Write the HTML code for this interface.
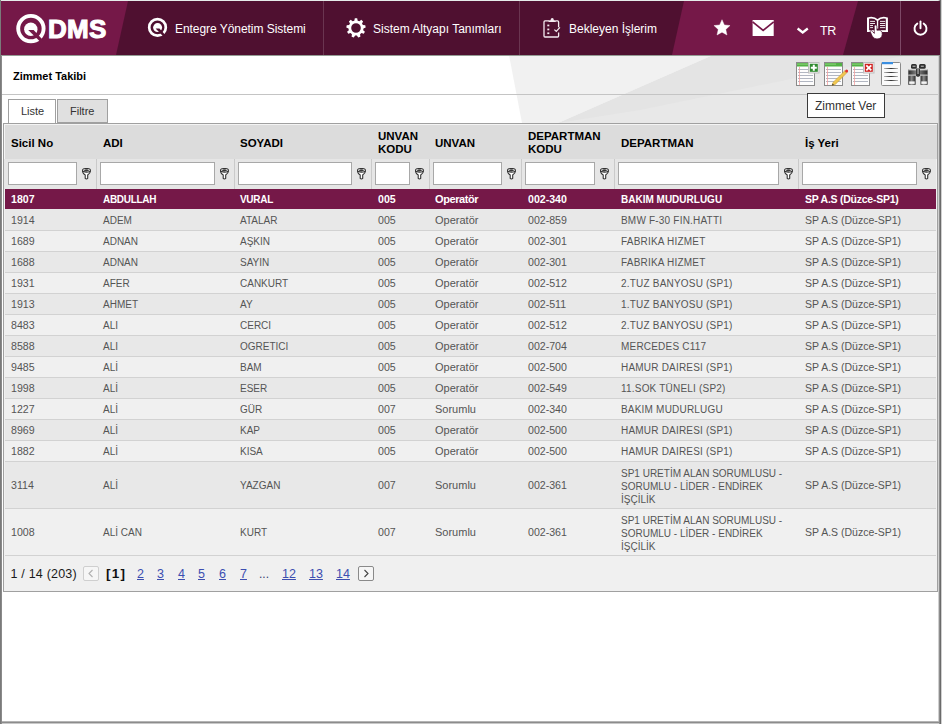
<!DOCTYPE html>
<html><head><meta charset="utf-8">
<style>
*{box-sizing:border-box;margin:0;padding:0}
html,body{width:942px;height:724px;overflow:hidden;background:#fff;font-family:"Liberation Sans",sans-serif}
.abs{position:absolute}
svg{display:block}
#hdr{position:absolute;left:1px;top:1px;width:939px;height:54px;background:#4f1030;overflow:hidden}
.mt{position:absolute;color:#fff;font-size:12px;white-space:nowrap;line-height:14px}
.grid{position:absolute;left:3px;top:123px;width:935px;height:469px;border:1px solid #a0a0a0;background:#f0f0f0}
.ghd{position:absolute;left:4px;top:124px;width:933px;height:35px;background:#dcdcdc;border-top:1px solid #f4f4f4;border-left:1px solid #f4f4f4}
.gfl{position:absolute;left:4px;top:159px;width:932px;height:30px;background:#e6e6e6}
.hd{position:absolute;font-weight:bold;font-size:11.5px;color:#000;line-height:13px;white-space:nowrap}
.row{position:absolute;left:5px;width:931px;font-size:11px;color:#555;background:#f0f0f0}
.row.alt{background:#e8e8e8}
.row.sel{background:#751848;color:#fff;font-weight:bold}
.rb{position:absolute;left:5px;width:931px;height:1px;background:#d2d2d2}
.row span{position:absolute;white-space:nowrap}
.inp{position:absolute;top:162px;height:23px;background:#fff;border:1px solid #a8a8a8}
.dv{position:absolute;top:159px;width:1px;height:30px;background:#cacaca}
.fi{position:absolute;top:168px}
.pg{position:absolute;top:567px;font-size:12.5px;color:#3c4eb0;text-decoration:underline;white-space:nowrap;line-height:14px}
</style></head>
<body>
<!-- page background shapes -->
<svg class="abs" style="left:0;top:0" width="942" height="724">
  <polygon points="509,55 713,55 558,123 522,123" fill="#f1f1f1"/>
  <polygon points="713,55 942,55 942,123 558,123" fill="#e4e4e4"/>
  <polygon points="558,123 640,110 942,48 942,123" fill="#e8e8e8"/>
</svg>

<!-- frame -->
<div class="abs" style="left:0;top:0;width:942px;height:1px;background:#e6ecea"></div>
<div class="abs" style="left:0;top:0;width:1px;height:724px;background:#7a7a7a"></div>
<div class="abs" style="left:1px;top:55px;width:1px;height:669px;background:#8a8a8a"></div>
<div class="abs" style="left:938px;top:0;width:1px;height:724px;background:#d0d0d0"></div>
<div class="abs" style="left:939px;top:0;width:1px;height:724px;background:#8c8c8c"></div>
<div class="abs" style="left:940px;top:0;width:1px;height:724px;background:#6a6a6a"></div>
<div class="abs" style="left:941px;top:0;width:1px;height:724px;background:#d0d0d0"></div>
<div class="abs" style="left:2px;top:721px;width:937px;height:1px;background:#b4b4b4"></div>
<div class="abs" style="left:2px;top:722px;width:937px;height:1px;background:#8c8c8c"></div>
<div class="abs" style="left:2px;top:723px;width:937px;height:1px;background:#c8c8c8"></div>

<!-- header -->
<div id="hdr">
  <svg class="abs" style="left:0;top:0" width="939" height="54">
    <polygon points="0,0 127,0 115,54 0,54" fill="#751848"/>
    <polygon points="683,0 857,0 842,54 671,54" fill="#751848"/>
    <line x1="322.5" y1="0" x2="322.5" y2="54" stroke="#6a3550" stroke-width="1"/>
    <line x1="518.5" y1="0" x2="518.5" y2="54" stroke="#6a3550" stroke-width="1"/>
    <line x1="899.5" y1="0" x2="899.5" y2="54" stroke="#7d4866" stroke-width="1"/>
  </svg>
</div>
<div class="abs" style="left:1px;top:55px;width:938px;height:1px;background:#949c94"></div>

<!-- logo -->
<svg class="abs" style="left:14px;top:12px" width="36" height="34" viewBox="14 12 36 34">
  <circle cx="30.9" cy="28.6" r="12.7" fill="none" stroke="#fff" stroke-width="3.9"/>
  <circle cx="30.8" cy="29.2" r="6.7" fill="#fff"/>
  <polygon points="28.2,30.1 33.6,30.1 43.2,40.3 41,42.5" fill="#751848"/>
</svg>
<div class="abs" style="left:48px;top:15px;font-size:26px;font-weight:bold;color:#fff;line-height:29px;letter-spacing:0.3px;-webkit-text-stroke:1.1px #fff">DMS</div>

<!-- menu 1 -->
<svg class="abs" style="left:146px;top:16px" width="24" height="24" viewBox="146 16 24 24">
  <circle cx="157.5" cy="27.4" r="8.3" fill="none" stroke="#fff" stroke-width="2.7"/>
  <circle cx="157.6" cy="27.6" r="4.5" fill="#fff"/>
  <polygon points="155.6,28.5 159.4,28.5 165.6,35.2 163.6,36.8" fill="#4f1030"/>
</svg>
<div class="mt" style="left:175px;top:22px;letter-spacing:-0.05px">Entegre Yönetim Sistemi</div>

<!-- menu 2: gear -->
<svg class="abs" style="left:343.8px;top:15.6px" width="24" height="24" viewBox="-12 -12 24 24">
  <g transform="rotate(0)">
    <path id="gearp" fill="#fff" fill-rule="evenodd" d="M-1.69,-7.31 L-1.18,-9.63 L1.18,-9.63 L1.69,-7.31 L3.40,-6.68 L5.28,-8.14 L7.09,-6.62 L5.99,-4.51 L6.90,-2.93 L9.28,-2.84 L9.69,-0.51 L7.49,0.39 L7.17,2.19 L8.93,3.79 L7.75,5.84 L5.49,5.11 L4.08,6.29 L4.40,8.64 L2.18,9.45 L0.91,7.44 L-0.91,7.44 L-2.18,9.45 L-4.40,8.64 L-4.08,6.29 L-5.49,5.11 L-7.75,5.84 L-8.93,3.79 L-7.17,2.19 L-7.49,0.39 L-9.69,-0.51 L-9.28,-2.84 L-6.90,-2.93 L-5.99,-4.51 L-7.09,-6.62 L-5.28,-8.14 L-3.40,-6.68 Z M4.8,0 A4.8,4.8 0 1 0 -4.8,0 A4.8,4.8 0 1 0 4.8,0 Z"/>
  </g>
</svg>
<div class="mt" style="left:373px;top:22px;letter-spacing:0px">Sistem Altyapı Tanımları</div>

<!-- menu 3: clipboard -->
<svg class="abs" style="left:540px;top:16px" width="24" height="24" viewBox="540 16 24 24">
  <path d="M549,20.9 H545 Q544,20.9 544,21.9 V36 Q544,37 545,37 H557.6 Q558.6,37 558.6,36 V32.4 M558.6,27.2 V21.9 Q558.6,20.9 557.6,20.9 H555.4" fill="none" stroke="#f4eaf0" stroke-width="1.3"/>
  <path d="M548.6,22 H555.8 V21 Q555.8,20.2 554.8,20.2 H553.9 Q553.7,18 552.2,18 Q550.7,18 550.5,20.2 H549.6 Q548.6,20.2 548.6,21 Z" fill="#f4eaf0"/>
  <rect x="547.3" y="24.6" width="2" height="1.7" fill="#f4eaf0"/>
  <rect x="547.3" y="28.6" width="2" height="1.7" fill="#f4eaf0"/>
  <rect x="547.3" y="32.4" width="2" height="1.7" fill="#f4eaf0"/>
  <path d="M554.4,29.6 L556.3,31.4 L559.9,27.4" fill="none" stroke="#f4eaf0" stroke-width="1.3"/>
</svg>
<div class="mt" style="left:569px;top:22px;letter-spacing:0px">Bekleyen İşlerim</div>

<!-- star -->
<svg class="abs" style="left:712px;top:18px" width="20" height="19" viewBox="712 18 20 19">
  <polygon points="722.00,19.70 724.34,24.94 730.05,25.55 725.78,29.39 726.97,35.00 722.00,32.14 717.03,35.00 718.22,29.39 713.95,25.55 719.66,24.94" fill="#fff" stroke="#fff" stroke-width="0.4" stroke-linejoin="round"/>
</svg>
<!-- mail -->
<svg class="abs" style="left:751px;top:19px" width="24" height="18" viewBox="751 19 24 18">
  <rect x="752.6" y="20" width="21.1" height="16" fill="#fff"/>
  <path d="M752.6,21.8 L763.15,30.4 L773.7,21.8" fill="none" stroke="#751848" stroke-width="1.7"/>
</svg>
<!-- chevron -->
<svg class="abs" style="left:795px;top:26px" width="16" height="10" viewBox="795 26 16 10">
  <path d="M797.6,28.5 L802.7,32.5 L807.8,28.5" fill="none" stroke="#fff" stroke-width="2.3"/>
</svg>
<div class="mt" style="left:820px;top:24px;font-size:12.5px;letter-spacing:-0.4px">TR</div>

<!-- book -->
<svg class="abs" style="left:864px;top:14px" width="28" height="28" viewBox="864 14 28 28">
  <rect x="867" y="17.5" width="2.1" height="14.5" fill="#fff"/>
  <rect x="885.8" y="17.5" width="2.1" height="14.5" fill="#fff"/>
  <rect x="867" y="30.2" width="20.9" height="1.8" fill="#fff"/>
  <path d="M868.5,18 Q874,16.8 877.5,20.2 Q881,16.8 886.5,18" fill="none" stroke="#fff" stroke-width="1.7"/>
  <rect x="876.9" y="20" width="1.3" height="8.6" fill="#fff"/>
  <g fill="#fff">
    <rect x="870.1" y="20.9" width="4.9" height="0.9"/><rect x="870.1" y="23" width="4.9" height="0.9"/>
    <rect x="870.1" y="25.1" width="2.9" height="0.9"/><rect x="870.1" y="27.2" width="2.9" height="0.9"/>
    <rect x="880" y="20.9" width="5.2" height="0.9"/><rect x="880" y="23" width="5.2" height="0.9"/>
    <rect x="880" y="25.1" width="5.2" height="0.9"/><rect x="880" y="27.2" width="5.2" height="0.9"/>
  </g>
  <path d="M874.3,26.3 Q874.3,25 875.6,25 Q876.9,25 876.9,26.3 V30.3 Q879.5,29.8 881.3,31 Q882.4,32 882.2,34.5 Q881.8,38.9 877,38.9 Q873.6,38.9 872.2,36 L870.2,31.6 Q870,30.6 871,30.6 Q872,30.6 872.6,31.6 L874.3,33.4 Z" fill="#fff" stroke="#4f1030" stroke-width="0.7"/>
</svg>
<!-- power -->
<svg class="abs" style="left:911px;top:18px" width="20" height="20" viewBox="911 18 20 20">
  <path d="M917.3,23.6 A6,6 0 1 0 923.7,23.6" fill="none" stroke="#fff" stroke-width="1.9" stroke-linecap="round"/>
  <line x1="920.5" y1="21.4" x2="920.5" y2="28.2" stroke="#fff" stroke-width="1.9" stroke-linecap="round"/>
</svg>

<!-- page title -->
<div class="abs" style="left:13px;top:70px;font-size:11px;font-weight:bold;color:#000;line-height:12px">Zimmet Takibi</div>
<div class="abs" style="left:2px;top:94px;width:936px;height:1px;background:#c4c4c4"></div>

<!-- toolbar icons -->
<svg class="abs" style="left:790px;top:58px" width="145" height="32" viewBox="790 58 145 32">
<g>
  <rect x="796.5" y="62.5" width="18" height="23" fill="#fdfdfd" stroke="#8a8a8a"/>
  <rect x="797" y="63" width="17" height="3.5" fill="#52b244"/>
  <rect x="797" y="63.6" width="11" height="1" fill="#8fd27f"/>
  <g stroke="#b2b7c2" stroke-width="1">
    <line x1="798" y1="69.5" x2="813" y2="69.5"/><line x1="798" y1="72.5" x2="813" y2="72.5"/>
    <line x1="798" y1="75.5" x2="813" y2="75.5"/><line x1="798" y1="78.5" x2="813" y2="78.5"/>
    <line x1="798" y1="81.5" x2="813" y2="81.5"/>
  </g>
  <line x1="799.5" y1="67" x2="799.5" y2="85" stroke="#f4a0a0" stroke-width="0.8"/>
</g>
<rect x="808.5" y="62.5" width="10.5" height="10.5" fill="#f2f2f2" stroke="#bdbdbd"/>
<rect x="809.8" y="63.8" width="8" height="8" fill="#2f8a2f"/>
<path d="M813.8,64.8 V70.8 M810.8,67.8 H816.8" stroke="#fff" stroke-width="2"/>
<g>
  <rect x="824.5" y="62.5" width="18" height="23" fill="#fdfdfd" stroke="#8a8a8a"/>
  <rect x="825" y="63" width="17" height="3.5" fill="#52b244"/>
  <rect x="825" y="63.6" width="11" height="1" fill="#8fd27f"/>
  <g stroke="#b2b7c2" stroke-width="1">
    <line x1="826" y1="69.5" x2="841" y2="69.5"/><line x1="826" y1="72.5" x2="841" y2="72.5"/>
    <line x1="826" y1="75.5" x2="841" y2="75.5"/><line x1="826" y1="78.5" x2="841" y2="78.5"/>
    <line x1="826" y1="81.5" x2="841" y2="81.5"/>
  </g>
  <line x1="827.5" y1="67" x2="827.5" y2="85" stroke="#f4a0a0" stroke-width="0.8"/>
</g>
<path d="M832,85.6 L833,82.4 L845,70.6 L847,72.6 L835.2,84.6 Z" fill="url(#pen)" stroke="#c09020" stroke-width="0.5"/>
<circle cx="846.6" cy="71" r="1.5" fill="#e03030"/>
<path d="M832,85.6 L832.6,83.6 L834,85 Z" fill="#333"/>
<g>
  <rect x="851.5" y="62.5" width="18" height="23" fill="#fdfdfd" stroke="#8a8a8a"/>
  <rect x="852" y="63" width="17" height="3.5" fill="#52b244"/>
  <rect x="852" y="63.6" width="11" height="1" fill="#8fd27f"/>
  <g stroke="#b2b7c2" stroke-width="1">
    <line x1="853" y1="69.5" x2="868" y2="69.5"/><line x1="853" y1="72.5" x2="868" y2="72.5"/>
    <line x1="853" y1="75.5" x2="868" y2="75.5"/><line x1="853" y1="78.5" x2="868" y2="78.5"/>
    <line x1="853" y1="81.5" x2="868" y2="81.5"/>
  </g>
  <line x1="854.5" y1="67" x2="854.5" y2="85" stroke="#f4a0a0" stroke-width="0.8"/>
</g>
<rect x="863.5" y="62.5" width="10.5" height="10.5" fill="#f2f2f2" stroke="#bdbdbd"/>
<rect x="864.8" y="63.8" width="8" height="8" fill="#d02020"/>
<path d="M866.3,65.3 L871.3,70.3 M871.3,65.3 L866.3,70.3" stroke="#fff" stroke-width="1.8"/>
<rect x="881.5" y="62.5" width="19" height="23" rx="1" fill="#fafafa" stroke="#8a8a8a"/>
<rect x="882" y="62" width="11" height="2.2" fill="#3a8ee0"/>
<g stroke="url(#dl)" stroke-width="1">
<line x1="884" y1="68.5" x2="898" y2="68.5"/><line x1="884" y1="72.5" x2="898" y2="72.5"/>
<line x1="884" y1="76.5" x2="898" y2="76.5"/><line x1="884" y1="80.5" x2="898" y2="80.5"/>
</g>
<defs>
<linearGradient id="bar" x1="0" y1="0" x2="1" y2="0"><stop offset="0" stop-color="#2a2a2a"/><stop offset="0.45" stop-color="#8a8a8a"/><stop offset="1" stop-color="#2a2a2a"/></linearGradient>
<linearGradient id="dl" gradientUnits="userSpaceOnUse" x1="883" y1="0" x2="899" y2="0"><stop offset="0" stop-color="#d0d0d0"/><stop offset="0.5" stop-color="#303030"/><stop offset="1" stop-color="#d0d0d0"/></linearGradient>
<linearGradient id="pen" x1="0" y1="0" x2="1" y2="1"><stop offset="0" stop-color="#ffe680"/><stop offset="1" stop-color="#e0a820"/></linearGradient>
</defs>
<rect x="911" y="64" width="5.8" height="4.8" rx="1.5" fill="#2e2e2e"/>
<rect x="919" y="64" width="6.7" height="4.8" rx="1.5" fill="#2e2e2e"/>
<rect x="912.5" y="65.6" width="3" height="1.4" fill="#9a9a9a"/><rect x="920.8" y="65.6" width="3" height="1.4" fill="#9a9a9a"/>
<rect x="908.3" y="69.2" width="19.3" height="6.4" fill="url(#bar)"/>
<rect x="908.3" y="69.2" width="19.3" height="1.1" fill="#e8e8e8"/>
<rect x="908.3" y="74.6" width="19.3" height="1" fill="#d8d8d8"/>
<path d="M916,68.5 H920 V76 L918,77 L916,76 Z" fill="#3a3a3a"/>
<rect x="917.4" y="69" width="1.3" height="5" fill="#aaa"/>
<rect x="908.3" y="75.8" width="7.3" height="9" fill="url(#bar)"/>
<rect x="920.5" y="75.8" width="7.1" height="9" fill="url(#bar)"/>
<rect x="909.2" y="81.4" width="5.5" height="2.5" fill="#f4f4f4"/>
<rect x="921.3" y="81.4" width="5.5" height="2.5" fill="#f4f4f4"/>
</svg>

<!-- tabs -->
<div class="abs" style="left:8px;top:99px;width:48px;height:24px;border:1px solid #a0a0a0;border-bottom:none;background:#fff"></div>
<div class="abs" style="left:21px;top:105px;font-size:11px;color:#333;z-index:3;line-height:12px">Liste</div>
<div class="abs" style="left:57px;top:99px;width:51px;height:24px;border:1px solid #a0a0a0;background:#e0e0e0"></div>
<div class="abs" style="left:70px;top:105px;font-size:11px;color:#333;line-height:12px">Filtre</div>

<!-- grid -->
<div class="grid"></div>
<div class="ghd"></div>
<div class="gfl"></div>
<div class="hd" style="left:11px;top:137px">Sicil No</div>
<div class="hd" style="left:103px;top:137px">ADI</div>
<div class="hd" style="left:240px;top:137px">SOYADI</div>
<div class="hd" style="left:378px;top:130px">UNVAN<br>KODU</div>
<div class="hd" style="left:435px;top:137px">UNVAN</div>
<div class="hd" style="left:528px;top:130px">DEPARTMAN<br>KODU</div>
<div class="hd" style="left:621px;top:137px">DEPARTMAN</div>
<div class="hd" style="left:805px;top:137px">İş Yeri</div>
<div class="inp" style="left:8px;width:69px"></div>
<svg class="fi" style="left:82px" width="11" height="12" viewBox="0 0 11 12"><path d="M0.4,2.6 Q0.6,5.4 3.2,6.9 L3.2,10.3 Q4.45,11.6 5.7,10.3 L5.7,6.9 Q8.3,5.4 8.5,2.6" fill="#fff" stroke="#333" stroke-width="1.1"/><ellipse cx="4.45" cy="2.3" rx="4" ry="1.8" fill="#fff" stroke="#333" stroke-width="1.1"/><path d="M1.6,2.6 Q4.45,-0.2 7.3,2.6 Q4.45,4.2 1.6,2.6 Z" fill="#3a3a3a"/></svg>
<div class="inp" style="left:100px;width:115px"></div>
<svg class="fi" style="left:220px" width="11" height="12" viewBox="0 0 11 12"><path d="M0.4,2.6 Q0.6,5.4 3.2,6.9 L3.2,10.3 Q4.45,11.6 5.7,10.3 L5.7,6.9 Q8.3,5.4 8.5,2.6" fill="#fff" stroke="#333" stroke-width="1.1"/><ellipse cx="4.45" cy="2.3" rx="4" ry="1.8" fill="#fff" stroke="#333" stroke-width="1.1"/><path d="M1.6,2.6 Q4.45,-0.2 7.3,2.6 Q4.45,4.2 1.6,2.6 Z" fill="#3a3a3a"/></svg>
<div class="inp" style="left:238px;width:114px"></div>
<svg class="fi" style="left:357px" width="11" height="12" viewBox="0 0 11 12"><path d="M0.4,2.6 Q0.6,5.4 3.2,6.9 L3.2,10.3 Q4.45,11.6 5.7,10.3 L5.7,6.9 Q8.3,5.4 8.5,2.6" fill="#fff" stroke="#333" stroke-width="1.1"/><ellipse cx="4.45" cy="2.3" rx="4" ry="1.8" fill="#fff" stroke="#333" stroke-width="1.1"/><path d="M1.6,2.6 Q4.45,-0.2 7.3,2.6 Q4.45,4.2 1.6,2.6 Z" fill="#3a3a3a"/></svg>
<div class="inp" style="left:375px;width:35px"></div>
<svg class="fi" style="left:415px" width="11" height="12" viewBox="0 0 11 12"><path d="M0.4,2.6 Q0.6,5.4 3.2,6.9 L3.2,10.3 Q4.45,11.6 5.7,10.3 L5.7,6.9 Q8.3,5.4 8.5,2.6" fill="#fff" stroke="#333" stroke-width="1.1"/><ellipse cx="4.45" cy="2.3" rx="4" ry="1.8" fill="#fff" stroke="#333" stroke-width="1.1"/><path d="M1.6,2.6 Q4.45,-0.2 7.3,2.6 Q4.45,4.2 1.6,2.6 Z" fill="#3a3a3a"/></svg>
<div class="inp" style="left:433px;width:69px"></div>
<svg class="fi" style="left:507px" width="11" height="12" viewBox="0 0 11 12"><path d="M0.4,2.6 Q0.6,5.4 3.2,6.9 L3.2,10.3 Q4.45,11.6 5.7,10.3 L5.7,6.9 Q8.3,5.4 8.5,2.6" fill="#fff" stroke="#333" stroke-width="1.1"/><ellipse cx="4.45" cy="2.3" rx="4" ry="1.8" fill="#fff" stroke="#333" stroke-width="1.1"/><path d="M1.6,2.6 Q4.45,-0.2 7.3,2.6 Q4.45,4.2 1.6,2.6 Z" fill="#3a3a3a"/></svg>
<div class="inp" style="left:525px;width:70px"></div>
<svg class="fi" style="left:600px" width="11" height="12" viewBox="0 0 11 12"><path d="M0.4,2.6 Q0.6,5.4 3.2,6.9 L3.2,10.3 Q4.45,11.6 5.7,10.3 L5.7,6.9 Q8.3,5.4 8.5,2.6" fill="#fff" stroke="#333" stroke-width="1.1"/><ellipse cx="4.45" cy="2.3" rx="4" ry="1.8" fill="#fff" stroke="#333" stroke-width="1.1"/><path d="M1.6,2.6 Q4.45,-0.2 7.3,2.6 Q4.45,4.2 1.6,2.6 Z" fill="#3a3a3a"/></svg>
<div class="inp" style="left:618px;width:161px"></div>
<svg class="fi" style="left:784px" width="11" height="12" viewBox="0 0 11 12"><path d="M0.4,2.6 Q0.6,5.4 3.2,6.9 L3.2,10.3 Q4.45,11.6 5.7,10.3 L5.7,6.9 Q8.3,5.4 8.5,2.6" fill="#fff" stroke="#333" stroke-width="1.1"/><ellipse cx="4.45" cy="2.3" rx="4" ry="1.8" fill="#fff" stroke="#333" stroke-width="1.1"/><path d="M1.6,2.6 Q4.45,-0.2 7.3,2.6 Q4.45,4.2 1.6,2.6 Z" fill="#3a3a3a"/></svg>
<div class="inp" style="left:802px;width:115px"></div>
<svg class="fi" style="left:922px" width="11" height="12" viewBox="0 0 11 12"><path d="M0.4,2.6 Q0.6,5.4 3.2,6.9 L3.2,10.3 Q4.45,11.6 5.7,10.3 L5.7,6.9 Q8.3,5.4 8.5,2.6" fill="#fff" stroke="#333" stroke-width="1.1"/><ellipse cx="4.45" cy="2.3" rx="4" ry="1.8" fill="#fff" stroke="#333" stroke-width="1.1"/><path d="M1.6,2.6 Q4.45,-0.2 7.3,2.6 Q4.45,4.2 1.6,2.6 Z" fill="#3a3a3a"/></svg>
<div class="dv" style="left:96px"></div>
<div class="dv" style="left:234px"></div>
<div class="dv" style="left:371px"></div>
<div class="dv" style="left:429px"></div>
<div class="dv" style="left:521px"></div>
<div class="dv" style="left:614px"></div>
<div class="dv" style="left:798px"></div>
<div class="row sel" style="top:189px;height:20px"><span style="left:6px;top:0px;font-size:10.6px;line-height:20px;">1807</span><span style="left:98px;top:1px;font-size:10px;line-height:20px;letter-spacing:-0.3px;">ABDULLAH</span><span style="left:235px;top:1px;font-size:10px;line-height:20px;letter-spacing:-0.3px;">VURAL</span><span style="left:373px;top:0px;font-size:10.6px;line-height:20px;">005</span><span style="left:430px;top:0px;font-size:11px;line-height:20px;letter-spacing:-0.4px;">Operatör</span><span style="left:523px;top:0px;font-size:10.6px;line-height:20px;">002-340</span><span style="left:616px;top:1px;font-size:10px;line-height:20px;">BAKIM MUDURLUGU</span><span style="left:800px;top:0px;font-size:10.5px;line-height:20px;letter-spacing:-0.25px;">SP A.S (Düzce-SP1)</span></div>
<div class="row alt" style="top:209px;height:21px"><span style="left:6px;top:1px;font-size:10.6px;line-height:21px;">1914</span><span style="left:98px;top:1px;font-size:10px;line-height:21px;">ADEM</span><span style="left:235px;top:1px;font-size:10px;line-height:21px;">ATALAR</span><span style="left:373px;top:1px;font-size:10.6px;line-height:21px;">005</span><span style="left:430px;top:1px;font-size:11px;line-height:21px;">Operatör</span><span style="left:523px;top:1px;font-size:10.6px;line-height:21px;">002-859</span><span style="left:616px;top:1px;font-size:10px;line-height:21px;letter-spacing:0.2px;">BMW F-30 FIN.HATTI</span><span style="left:800px;top:1px;font-size:10.5px;line-height:21px;">SP A.S (Düzce-SP1)</span></div>
<div class="rb" style="top:230px"></div>
<div class="row" style="top:231px;height:20px"><span style="left:6px;top:0px;font-size:10.6px;line-height:20px;">1689</span><span style="left:98px;top:1px;font-size:10px;line-height:20px;">ADNAN</span><span style="left:235px;top:1px;font-size:10px;line-height:20px;">AŞKIN</span><span style="left:373px;top:0px;font-size:10.6px;line-height:20px;">005</span><span style="left:430px;top:0px;font-size:11px;line-height:20px;">Operatör</span><span style="left:523px;top:0px;font-size:10.6px;line-height:20px;">002-301</span><span style="left:616px;top:1px;font-size:10px;line-height:20px;letter-spacing:0.2px;">FABRIKA HIZMET</span><span style="left:800px;top:0px;font-size:10.5px;line-height:20px;">SP A.S (Düzce-SP1)</span></div>
<div class="rb" style="top:251px"></div>
<div class="row alt" style="top:252px;height:20px"><span style="left:6px;top:0px;font-size:10.6px;line-height:20px;">1688</span><span style="left:98px;top:1px;font-size:10px;line-height:20px;">ADNAN</span><span style="left:235px;top:1px;font-size:10px;line-height:20px;">SAYIN</span><span style="left:373px;top:0px;font-size:10.6px;line-height:20px;">005</span><span style="left:430px;top:0px;font-size:11px;line-height:20px;">Operatör</span><span style="left:523px;top:0px;font-size:10.6px;line-height:20px;">002-301</span><span style="left:616px;top:1px;font-size:10px;line-height:20px;letter-spacing:0.2px;">FABRIKA HIZMET</span><span style="left:800px;top:0px;font-size:10.5px;line-height:20px;">SP A.S (Düzce-SP1)</span></div>
<div class="rb" style="top:272px"></div>
<div class="row" style="top:273px;height:20px"><span style="left:6px;top:0px;font-size:10.6px;line-height:20px;">1931</span><span style="left:98px;top:1px;font-size:10px;line-height:20px;">AFER</span><span style="left:235px;top:1px;font-size:10px;line-height:20px;">CANKURT</span><span style="left:373px;top:0px;font-size:10.6px;line-height:20px;">005</span><span style="left:430px;top:0px;font-size:11px;line-height:20px;">Operatör</span><span style="left:523px;top:0px;font-size:10.6px;line-height:20px;">002-512</span><span style="left:616px;top:1px;font-size:10px;line-height:20px;letter-spacing:0.2px;">2.TUZ BANYOSU (SP1)</span><span style="left:800px;top:0px;font-size:10.5px;line-height:20px;">SP A.S (Düzce-SP1)</span></div>
<div class="rb" style="top:293px"></div>
<div class="row alt" style="top:294px;height:20px"><span style="left:6px;top:0px;font-size:10.6px;line-height:20px;">1913</span><span style="left:98px;top:1px;font-size:10px;line-height:20px;">AHMET</span><span style="left:235px;top:1px;font-size:10px;line-height:20px;">AY</span><span style="left:373px;top:0px;font-size:10.6px;line-height:20px;">005</span><span style="left:430px;top:0px;font-size:11px;line-height:20px;">Operatör</span><span style="left:523px;top:0px;font-size:10.6px;line-height:20px;">002-511</span><span style="left:616px;top:1px;font-size:10px;line-height:20px;letter-spacing:0.2px;">1.TUZ BANYOSU (SP1)</span><span style="left:800px;top:0px;font-size:10.5px;line-height:20px;">SP A.S (Düzce-SP1)</span></div>
<div class="rb" style="top:314px"></div>
<div class="row" style="top:315px;height:20px"><span style="left:6px;top:0px;font-size:10.6px;line-height:20px;">8483</span><span style="left:98px;top:1px;font-size:10px;line-height:20px;">ALI</span><span style="left:235px;top:1px;font-size:10px;line-height:20px;">CERCI</span><span style="left:373px;top:0px;font-size:10.6px;line-height:20px;">005</span><span style="left:430px;top:0px;font-size:11px;line-height:20px;">Operatör</span><span style="left:523px;top:0px;font-size:10.6px;line-height:20px;">002-512</span><span style="left:616px;top:1px;font-size:10px;line-height:20px;letter-spacing:0.2px;">2.TUZ BANYOSU (SP1)</span><span style="left:800px;top:0px;font-size:10.5px;line-height:20px;">SP A.S (Düzce-SP1)</span></div>
<div class="rb" style="top:335px"></div>
<div class="row alt" style="top:336px;height:20px"><span style="left:6px;top:0px;font-size:10.6px;line-height:20px;">8588</span><span style="left:98px;top:1px;font-size:10px;line-height:20px;">ALI</span><span style="left:235px;top:1px;font-size:10px;line-height:20px;">OGRETICI</span><span style="left:373px;top:0px;font-size:10.6px;line-height:20px;">005</span><span style="left:430px;top:0px;font-size:11px;line-height:20px;">Operatör</span><span style="left:523px;top:0px;font-size:10.6px;line-height:20px;">002-704</span><span style="left:616px;top:1px;font-size:10px;line-height:20px;letter-spacing:0.2px;">MERCEDES C117</span><span style="left:800px;top:0px;font-size:10.5px;line-height:20px;">SP A.S (Düzce-SP1)</span></div>
<div class="rb" style="top:356px"></div>
<div class="row" style="top:357px;height:20px"><span style="left:6px;top:0px;font-size:10.6px;line-height:20px;">9485</span><span style="left:98px;top:1px;font-size:10px;line-height:20px;">ALİ</span><span style="left:235px;top:1px;font-size:10px;line-height:20px;">BAM</span><span style="left:373px;top:0px;font-size:10.6px;line-height:20px;">005</span><span style="left:430px;top:0px;font-size:11px;line-height:20px;">Operatör</span><span style="left:523px;top:0px;font-size:10.6px;line-height:20px;">002-500</span><span style="left:616px;top:1px;font-size:10px;line-height:20px;letter-spacing:0.2px;">HAMUR DAIRESI (SP1)</span><span style="left:800px;top:0px;font-size:10.5px;line-height:20px;">SP A.S (Düzce-SP1)</span></div>
<div class="rb" style="top:377px"></div>
<div class="row alt" style="top:378px;height:20px"><span style="left:6px;top:0px;font-size:10.6px;line-height:20px;">1998</span><span style="left:98px;top:1px;font-size:10px;line-height:20px;">ALİ</span><span style="left:235px;top:1px;font-size:10px;line-height:20px;">ESER</span><span style="left:373px;top:0px;font-size:10.6px;line-height:20px;">005</span><span style="left:430px;top:0px;font-size:11px;line-height:20px;">Operatör</span><span style="left:523px;top:0px;font-size:10.6px;line-height:20px;">002-549</span><span style="left:616px;top:1px;font-size:10px;line-height:20px;letter-spacing:0.2px;">11.SOK TÜNELI (SP2)</span><span style="left:800px;top:0px;font-size:10.5px;line-height:20px;">SP A.S (Düzce-SP1)</span></div>
<div class="rb" style="top:398px"></div>
<div class="row" style="top:399px;height:20px"><span style="left:6px;top:0px;font-size:10.6px;line-height:20px;">1227</span><span style="left:98px;top:1px;font-size:10px;line-height:20px;">ALİ</span><span style="left:235px;top:1px;font-size:10px;line-height:20px;">GÜR</span><span style="left:373px;top:0px;font-size:10.6px;line-height:20px;">007</span><span style="left:430px;top:0px;font-size:11px;line-height:20px;">Sorumlu</span><span style="left:523px;top:0px;font-size:10.6px;line-height:20px;">002-340</span><span style="left:616px;top:1px;font-size:10px;line-height:20px;letter-spacing:0.2px;">BAKIM MUDURLUGU</span><span style="left:800px;top:0px;font-size:10.5px;line-height:20px;">SP A.S (Düzce-SP1)</span></div>
<div class="rb" style="top:419px"></div>
<div class="row alt" style="top:420px;height:20px"><span style="left:6px;top:0px;font-size:10.6px;line-height:20px;">8969</span><span style="left:98px;top:1px;font-size:10px;line-height:20px;">ALİ</span><span style="left:235px;top:1px;font-size:10px;line-height:20px;">KAP</span><span style="left:373px;top:0px;font-size:10.6px;line-height:20px;">005</span><span style="left:430px;top:0px;font-size:11px;line-height:20px;">Operatör</span><span style="left:523px;top:0px;font-size:10.6px;line-height:20px;">002-500</span><span style="left:616px;top:1px;font-size:10px;line-height:20px;letter-spacing:0.2px;">HAMUR DAIRESI (SP1)</span><span style="left:800px;top:0px;font-size:10.5px;line-height:20px;">SP A.S (Düzce-SP1)</span></div>
<div class="rb" style="top:440px"></div>
<div class="row" style="top:441px;height:20px"><span style="left:6px;top:0px;font-size:10.6px;line-height:20px;">1882</span><span style="left:98px;top:1px;font-size:10px;line-height:20px;">ALİ</span><span style="left:235px;top:1px;font-size:10px;line-height:20px;">KISA</span><span style="left:373px;top:0px;font-size:10.6px;line-height:20px;">005</span><span style="left:430px;top:0px;font-size:11px;line-height:20px;">Operatör</span><span style="left:523px;top:0px;font-size:10.6px;line-height:20px;">002-500</span><span style="left:616px;top:1px;font-size:10px;line-height:20px;letter-spacing:0.2px;">HAMUR DAIRESI (SP1)</span><span style="left:800px;top:0px;font-size:10.5px;line-height:20px;">SP A.S (Düzce-SP1)</span></div>
<div class="rb" style="top:461px"></div>
<div class="row alt" style="top:462px;height:46px"><span style="left:6px;top:0px;font-size:10.6px;line-height:46px;">3114</span><span style="left:98px;top:1px;font-size:10px;line-height:46px;">ALİ</span><span style="left:235px;top:1px;font-size:10px;line-height:46px;">YAZGAN</span><span style="left:373px;top:0px;font-size:10.6px;line-height:46px;">007</span><span style="left:430px;top:0px;font-size:11px;line-height:46px;">Sorumlu</span><span style="left:523px;top:0px;font-size:10.6px;line-height:46px;">002-361</span><span style="left:616px;top:5px;font-size:10px;line-height:13px">SP1 URETİM ALAN SORUMLUSU -<br>SORUMLU - LİDER - ENDİREK<br>İŞÇİLİK</span><span style="left:800px;top:0px;font-size:10.5px;line-height:46px;">SP A.S (Düzce-SP1)</span></div>
<div class="rb" style="top:508px"></div>
<div class="row" style="top:509px;height:46px"><span style="left:6px;top:0px;font-size:10.6px;line-height:46px;">1008</span><span style="left:98px;top:1px;font-size:10px;line-height:46px;">ALİ CAN</span><span style="left:235px;top:1px;font-size:10px;line-height:46px;">KURT</span><span style="left:373px;top:0px;font-size:10.6px;line-height:46px;">007</span><span style="left:430px;top:0px;font-size:11px;line-height:46px;">Sorumlu</span><span style="left:523px;top:0px;font-size:10.6px;line-height:46px;">002-361</span><span style="left:616px;top:5px;font-size:10px;line-height:13px">SP1 URETİM ALAN SORUMLUSU -<br>SORUMLU - LİDER - ENDİREK<br>İŞÇİLİK</span><span style="left:800px;top:0px;font-size:10.5px;line-height:46px;">SP A.S (Düzce-SP1)</span></div>
<div class="rb" style="top:555px"></div>

<div class="abs" style="left:10.5px;top:567px;font-size:12.5px;color:#1a1a1a;line-height:14px;white-space:nowrap;letter-spacing:0.2px">1 / 14 (203)</div>
<div class="abs" style="left:83px;top:566px;width:16px;height:15px;border:1px solid #cfcfcf;border-radius:2px;background:#f6f6f6"></div>
<svg class="abs" style="left:87px;top:569px" width="8" height="9"><path d="M5.5,1 L2,4.5 L5.5,8" fill="none" stroke="#b0b0b0" stroke-width="1.1"/></svg>
<div class="abs" style="left:106px;top:566px;font-size:13.5px;font-weight:bold;color:#111;line-height:15px;letter-spacing:1.2px">[1]</div>
<div class="pg" style="left:137px">2</div>
<div class="pg" style="left:157px">3</div>
<div class="pg" style="left:178px">4</div>
<div class="pg" style="left:198px">5</div>
<div class="pg" style="left:219px">6</div>
<div class="pg" style="left:240px">7</div>
<div class="pg" style="left:282px">12</div>
<div class="pg" style="left:309px">13</div>
<div class="pg" style="left:336px">14</div>
<div class="abs" style="left:259px;top:567px;font-size:12px;color:#3a4270;line-height:14px">...</div>
<div class="abs" style="left:358px;top:566px;width:16px;height:15px;border:1px solid #8a8a8a;border-radius:2px;background:#f6f6f6"></div>
<svg class="abs" style="left:362px;top:569px" width="8" height="9"><path d="M2.5,1 L6,4.5 L2.5,8" fill="none" stroke="#444" stroke-width="1.1"/></svg>


<!-- tooltip -->
<div class="abs" style="left:807px;top:93px;width:78px;height:25px;border:1px solid #3a3a3a;background:#fff"></div>
<div class="abs" style="left:815px;top:99px;font-size:12px;color:#333;line-height:14px;white-space:nowrap">Zimmet Ver</div>
</body></html>
